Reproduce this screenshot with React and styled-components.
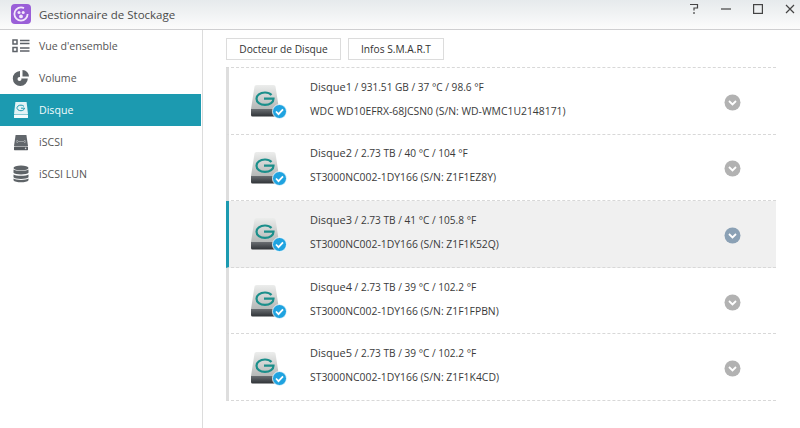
import React from 'react';
import styled, { createGlobalStyle } from 'styled-components';

const GlobalStyle = createGlobalStyle`
  html, body {
    margin: 0;
    padding: 0;
    background: #fff;
  }
  body {
    font-family: "Open Sans", "Noto Sans", sans-serif;
  }
`;

const navItems = [
  { id: 'overview', label: "Vue d'ensemble" },
  { id: 'volume', label: 'Volume' },
  { id: 'disk', label: 'Disque', active: true },
  { id: 'iscsi', label: 'iSCSI' },
  { id: 'lun', label: 'iSCSI LUN' },
];

const disks = [
  { name: 'Disque1', info: ' / 931.51 GB / 37 °C / 98.6 °F', model: 'WDC WD10EFRX-68JCSN0 (S/N: WD-WMC1U2148171)' },
  { name: 'Disque2', info: ' / 2.73 TB / 40 °C / 104 °F', model: 'ST3000NC002-1DY166 (S/N: Z1F1EZ8Y)' },
  { name: 'Disque3', info: ' / 2.73 TB / 41 °C / 105.8 °F', model: 'ST3000NC002-1DY166 (S/N: Z1F1K52Q)', selected: true },
  { name: 'Disque4', info: ' / 2.73 TB / 39 °C / 102.2 °F', model: 'ST3000NC002-1DY166 (S/N: Z1F1FPBN)' },
  { name: 'Disque5', info: ' / 2.73 TB / 39 °C / 102.2 °F', model: 'ST3000NC002-1DY166 (S/N: Z1F1K4CD)' },
];

function AppLogo() {
  return (
    <svg width="20" height="20" viewBox="0 0 20 20">
      <rect width="20" height="20" rx="4" fill="#9a5fd8" />
      <circle cx="10" cy="10" r="6.6" fill="none" stroke="#f3e9fb" strokeWidth="1.8" strokeDasharray="34 8" />
      <circle cx="8" cy="8.6" r="1.5" fill="#f3e9fb" />
      <circle cx="12.2" cy="8.6" r="1.5" fill="#f3e9fb" />
      <circle cx="10" cy="12.4" r="1.9" fill="#f3e9fb" />
    </svg>
  );
}

function NavIcon({ id }) {
  if (id === 'overview') {
    return (
      <svg width="18" height="14" viewBox="0 0 18 14" fill="none" stroke="#5d6268">
        <rect x="1" y="1" width="4" height="4" strokeWidth="1.5" />
        <rect x="1" y="8.5" width="4" height="4" strokeWidth="1.5" />
        <path d="M8 1.500h9.500M8 4.500h9.500M8 9h9.500M8 12h9.500" strokeWidth="1.3" />
      </svg>
    );
  }
  if (id === 'volume') {
    return (
      <svg width="18" height="18" viewBox="0 0 18 18">
        <path d="M8 2a7.500 7.500 0 1 0 7.800 7.500H8z" fill="#5f6468" />
        <circle cx="7.500" cy="10" r="2" fill="#fff" />
        <path d="M10.500 1a6.500 6.500 0 0 1 6.500 6.500h-6.500z" fill="#5f6468" />
      </svg>
    );
  }
  if (id === 'disk') {
    return (
      <svg width="16" height="18" viewBox="0 0 16 18">
        <path d="M2.400 1h11.200L15 13H1z" fill="#e3f3f6" />
        <rect x="1" y="13.400" width="14" height="3.600" rx="0.600" fill="#f4fbfc" />
        <path d="M11 5.400a3.800 2.800 0 1 0 .6 1.800H8" fill="none" stroke="#1c9ab0" strokeWidth="1" />
      </svg>
    );
  }
  if (id === 'iscsi') {
    return (
      <svg width="16" height="17" viewBox="0 0 16 17">
        <path d="M2.600 1h10.800L15 12H1z" fill="#62676c" />
        <path d="M5 6.500H3.800v2H5M11 6.500h1.200v2H11M5 7.500h6" fill="none" stroke="#a9adb0" strokeWidth="0.8" />
        <rect x="1" y="12.600" width="14" height="3.600" rx="0.600" fill="#54595e" />
        <circle cx="12.600" cy="14.400" r="0.800" fill="#d5d7d9" />
      </svg>
    );
  }
  return (
    <svg width="16" height="18" viewBox="0 0 16 18" fill="#5f6468">
      <ellipse cx="8" cy="3" rx="7.500" ry="2.600" />
      <path d="M.5 4.600C2 6.400 14 6.400 15.500 4.600v3.200C14 10 2 10 .5 7.800z" />
      <path d="M.5 9.400C2 11.200 14 11.200 15.500 9.400v2.900C14 14.400 2 14.400 .5 12.300z" />
      <path d="M.5 13.600C2 15.500 14 15.500 15.500 13.600v1.600C14 18 2 18 .5 15.200z" />
    </svg>
  );
}

function DiskIcon() {
  return (
    <svg width="38" height="34" viewBox="0 0 38 34">
      <defs>
        <linearGradient id="diskBody" x1="0" y1="0" x2="0" y2="1">
          <stop offset="0" stopColor="#ecedec" />
          <stop offset="1" stopColor="#b5b8b7" />
        </linearGradient>
        <linearGradient id="diskBase" x1="0" y1="0" x2="0" y2="1">
          <stop offset="0" stopColor="#6a6e72" />
          <stop offset="1" stopColor="#2f3337" />
        </linearGradient>
      </defs>
      <path d="M4.500 1.500Q4.700 0 6.500 0h17q1.800 0 2 1.500L29 24H1z" fill="url(#diskBody)" />
      <path d="M1 24h28v6q0 1.500-1.500 1.500h-25Q1 31.500 1 30z" fill="url(#diskBase)" />
      <path d="M21.500 10C19.800 8.200 17.500 7.500 15 7.500c-5 0-8.500 2.700-8.500 6.200s3.500 6.200 8.500 6.200c5 0 8.500-2.700 8.500-6.200H14" fill="none" stroke="#1b8f8b" strokeWidth="2.200" />
      <circle cx="29.500" cy="26.500" r="7" fill="#1fa3e0" stroke="#fff" strokeWidth="0.800" />
      <path d="M26 26.500l2.500 2.600 4.500-4.800" fill="none" stroke="#fff" strokeWidth="1.800" />
    </svg>
  );
}

function ToggleIcon({ selected }) {
  return (
    <ToggleSvg width="17" height="17" viewBox="0 0 17 17">
      <circle cx="8.500" cy="8.500" r="8" fill={selected ? '#8ba1b5' : '#b2b2b2'} />
      <path d="M5 7l3.500 3.400L12 7" fill="none" stroke="#fff" strokeWidth="1.800" />
    </ToggleSvg>
  );
}

function App() {
  return (
    <Window>
      <GlobalStyle />
      <TitleBar>
        <TitleGroup>
          <LogoBox>
            <AppLogo />
          </LogoBox>
          <Title>Gestionnaire de Stockage</Title>
        </TitleGroup>
        <WindowControls>
          <svg width="10" height="12" viewBox="0 0 10 12" fill="none" stroke="#444" strokeWidth="1.200">
            <path d="M1 1.500h7.500v3.500H5v2.500M5 9v2" />
          </svg>
          <svg width="10" height="10" viewBox="0 0 10 10" stroke="#444" strokeWidth="1.200">
            <path d="M0 5h10" />
          </svg>
          <svg width="10" height="10" viewBox="0 0 10 10" fill="none" stroke="#444" strokeWidth="1.200">
            <rect x="0.600" y="0.600" width="8.800" height="8.800" />
          </svg>
          <svg width="10" height="10" viewBox="0 0 10 10" stroke="#444" strokeWidth="1.200">
            <path d="M1 1l8 8M9 1l-8 8" />
          </svg>
        </WindowControls>
      </TitleBar>
      <Body>
        <Sidebar>
          {navItems.map((item) => (
            <NavItem key={item.id} $active={item.active}>
              <NavIconBox>
                <NavIcon id={item.id} />
              </NavIconBox>
              {item.label}
            </NavItem>
          ))}
        </Sidebar>
        <Content>
          <Toolbar>
            <ToolButton $width={115}>Docteur de Disque</ToolButton>
            <ToolButton $width={96}>Infos S.M.A.R.T</ToolButton>
          </Toolbar>
          <DiskList>
            {disks.map((disk) => (
              <DiskRow key={disk.name} $selected={disk.selected}>
                <DiskIconBox>
                  <DiskIcon />
                </DiskIconBox>
                <DiskText>
                  <div>
                    <DiskName>{disk.name}</DiskName>
                    {disk.info}
                  </div>
                  <ModelLine>{disk.model}</ModelLine>
                </DiskText>
                <ToggleIcon selected={disk.selected} />
              </DiskRow>
            ))}
          </DiskList>
        </Content>
      </Body>
    </Window>
  );
}

const Window = styled.div`
  width: 800px;
  height: 428px;
  overflow: hidden;
  background: #fff;
`;

const TitleBar = styled.div`
  height: 29px;
  border-bottom: 1px solid #cfcfd1;
  background: linear-gradient(#e6eaec, #fcfcfc);
  display: flex;
  align-items: center;
  justify-content: space-between;
  padding: 0 5px 0 11px;
`;

const TitleGroup = styled.div`
  display: flex;
  align-items: center;
  gap: 8px;
`;

const LogoBox = styled.div`
  display: flex;
  margin-top: -2px;
`;

const Title = styled.span`
  font-size: 11.500px;
  color: #4a4a4a;
`;

const WindowControls = styled.div`
  display: flex;
  align-items: center;
  gap: 22px;
  margin-top: -11px;
`;

const Body = styled.div`
  display: flex;
  height: 398px;
`;

const Sidebar = styled.nav`
  width: 202px;
  border-right: 1px solid #dcdcdc;
  flex-shrink: 0;
`;

const NavItem = styled.div`
  height: 32px;
  display: flex;
  align-items: center;
  font-size: 10.600px;
  color: ${(p) => (p.$active ? '#f2fbfc' : '#555')};
  background: ${(p) => (p.$active ? '#1c9ab0' : 'transparent')};
  margin-right: 1px;
`;

const NavIconBox = styled.div`
  width: 36px;
  display: flex;
  justify-content: center;
  padding-left: 3px;
`;

const Content = styled.main`
  flex: 1;
  padding: 8px 23px 0;
`;

const Toolbar = styled.div`
  display: flex;
  gap: 7px;
  margin-bottom: 7px;
`;

const ToolButton = styled.button`
  width: ${(p) => p.$width}px;
  height: 22px;
  padding: 0;
  border: 1px solid #dcdcdc;
  background: #fff;
  color: #333;
  font-family: inherit;
  font-size: 10.200px;
`;

const DiskList = styled.div`
  width: 550px;
  border-top: 1px dashed #d8d8d8;
`;

const DiskRow = styled.div`
  height: 65.600px;
  display: flex;
  align-items: center;
  border-bottom: 1px dashed #d8d8d8;
  border-left: 3px solid ${(p) => (p.$selected ? '#1c9ab0' : '#dedede')};
  background: ${(p) => (p.$selected ? '#f0f0f0' : '#fff')};
  padding-right: 35px;
`;

const DiskIconBox = styled.div`
  width: 60px;
  padding: 3px 0 0 21px;
  flex-shrink: 0;
  display: flex;
`;

const DiskText = styled.div`
  flex: 1;
  display: flex;
  flex-direction: column;
  gap: 11px;
  font-size: 10.100px;
  line-height: 13px;
  color: #3a3a3a;
  margin-top: -4px;
`;

const DiskName = styled.span`
  font-size: 11px;
`;

const ModelLine = styled.div`
  font-size: 10.400px;
`;

const ToggleSvg = styled.svg`
  margin-top: 3px;
`;

export default App;
